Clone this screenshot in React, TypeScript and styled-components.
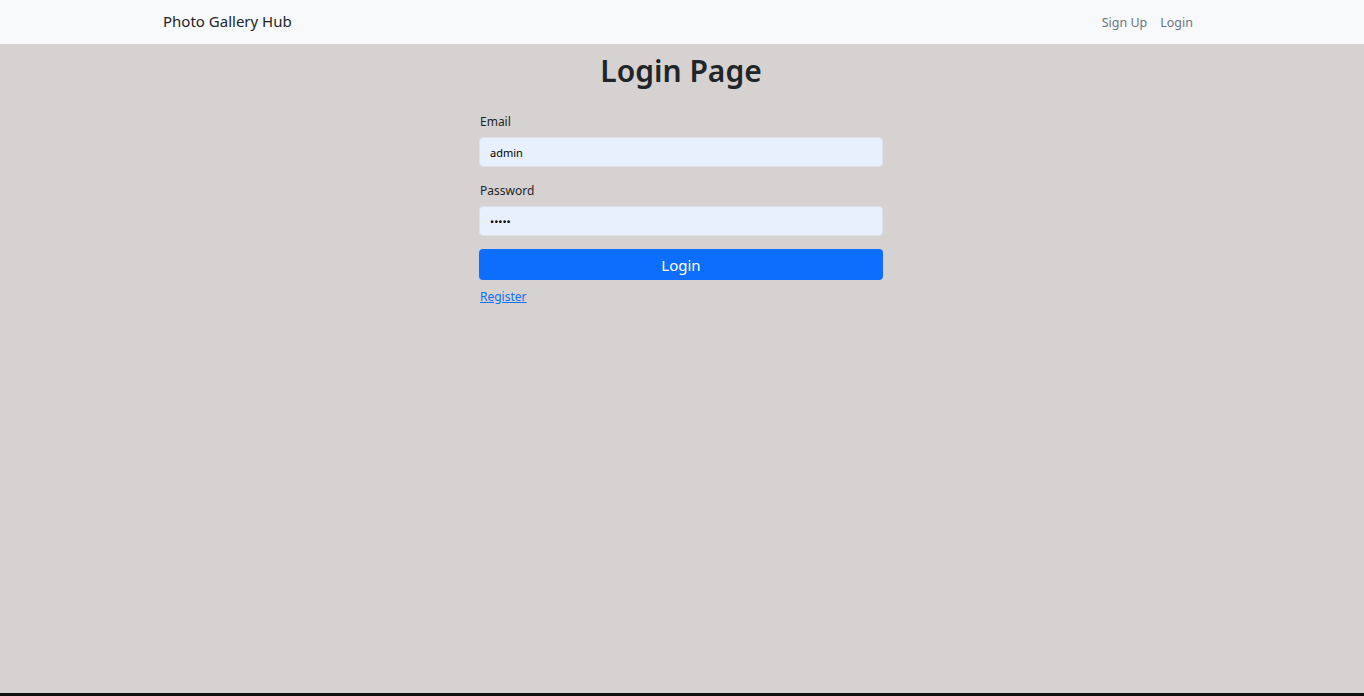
import React, { useState } from 'react';
import styled, { createGlobalStyle } from 'styled-components';

const GlobalStyle = createGlobalStyle`
  * { box-sizing: border-box; }
  html, body { margin: 0; padding: 0; }
  body {
    font-family: 'Noto Sans', 'Open Sans', sans-serif;
    color: #212529;
    background-color: #d6d2d1;
  }
`;

const Page = styled.div`
  min-height: 696px;
  display: flex;
  flex-direction: column;
`;

const Navbar = styled.nav`
  height: 44px;
  background-color: #f8f9fa;
  display: flex;
  align-items: center;
  justify-content: space-between;
  padding: 0 171px 0 163px;
`;

const Brand = styled.a`
  font-size: 15px;
  color: #212529;
  text-decoration: none;
  margin-top: -2px;
`;

const NavLinks = styled.div`
  display: flex;
  gap: 13px;
`;

const NavLink = styled.a`
  font-size: 12.5px;
  color: #6c757d;
  text-decoration: none;
`;

const Main = styled.main`
  flex: 1;
  display: flex;
  flex-direction: column;
  align-items: center;
  padding-right: 2px;
`;

const Heading = styled.h2`
  font-size: 30px;
  font-weight: 600;
  margin: 9px 0 0;
  line-height: 1.2;
  color: #212529;
`;

const Form = styled.form`
  width: 404px;
  margin-top: 24px;
  display: flex;
  flex-direction: column;
`;

const Field = styled.div`
  display: flex;
  flex-direction: column;
  margin-bottom: 15px;
`;

const Label = styled.label`
  font-size: 12px;
  margin-left: 1px;
  margin-bottom: 7px;
  color: #212529;
`;

const Input = styled.input`
  height: 30px;
  width: 100%;
  border: 1px solid #dee2e6;
  border-radius: 4px;
  background-color: #e8f0fe;
  padding: 0 10px;
  font-family: 'Noto Sans', sans-serif;
  font-size: 11px;
  color: #000;
  outline: none;
`;

const SubmitButton = styled.button`
  height: 31px;
  width: 100%;
  margin-top: -2px;
  border: none;
  border-radius: 4px;
  background-color: #0d6efd;
  color: #fff;
  font-family: 'Noto Sans', sans-serif;
  font-size: 15px;
  cursor: pointer;
`;

const RegisterLink = styled.a`
  margin-top: 8px;
  margin-left: 1px;
  font-size: 12px;
  color: #0d6efd;
  text-decoration: underline;
`;

const BottomStrip = styled.div`
  height: 3px;
  background-color: #111;
`;

export default function App() {
  const [email, setEmail] = useState('admin');
  const [password, setPassword] = useState('admin');

  return (
    <>
      <GlobalStyle />
      <Page>
        <Navbar>
          <Brand href="#">Photo Gallery Hub</Brand>
          <NavLinks>
            <NavLink href="#">Sign Up</NavLink>
            <NavLink href="#">Login</NavLink>
          </NavLinks>
        </Navbar>
        <Main>
          <Heading>Login Page</Heading>
          <Form onSubmit={(e) => e.preventDefault()}>
            <Field>
              <Label>Email</Label>
              <Input type="text" value={email} onChange={(e) => setEmail(e.target.value)} />
            </Field>
            <Field>
              <Label>Password</Label>
              <Input type="password" value={password} onChange={(e) => setPassword(e.target.value)} />
            </Field>
            <SubmitButton type="submit">Login</SubmitButton>
            <RegisterLink href="#">Register</RegisterLink>
          </Form>
        </Main>
        <BottomStrip />
      </Page>
    </>
  );
}
